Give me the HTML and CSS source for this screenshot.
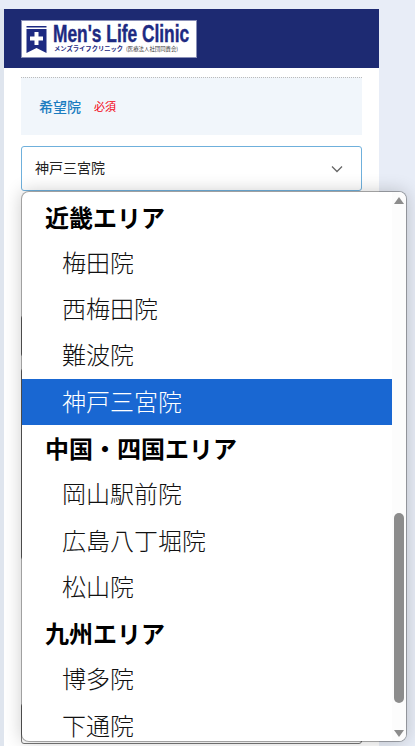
FILE: index.html
```html
<!DOCTYPE html>
<html lang="ja">
<head>
  <meta charset="UTF-8" />
  <title>Men's Life Clinic</title>
  <link rel="stylesheet" href="styles.css">
</head>
<body>
  <div class="page">
    <header class="site-header">
      <svg class="logo" width="176" height="38" viewBox="0 0 176 38">
        <rect x="0.5" y="0.5" width="175" height="37" fill="#fff" stroke="#8a90b8"/>
        <rect x="5.500" y="6" width="20" height="1.500" fill="#1d2a82"/>
        <path d="M5.500 9H25.500V33L15.500 28L5.500 33Z" fill="#1d2a82"/>
        <path d="M13.500 12H17.500V16.500H22V20.500H17.500V25H13.500V20.500H9V16.500H13.500Z" fill="#fff"/>
        <text transform="translate(32 21.500) scale(0.755 1)" class="logo-name">Men's Life Clinic</text>
        <text x="33" y="31" class="logo-kana">メンズライフクリニック</text>
        <text x="105" y="31" class="logo-corp">(医療法人社団同貴会)</text>
      </svg>
    </header>

    <main class="form-body">
      <div class="field-label">
        <span class="label-text">希望院</span>
        <span class="required">必須</span>
      </div>

      <div class="select-wrap">
        <div class="select-box">
          <span>神戸三宮院</span>
          <svg class="chevron" width="12" height="8" viewBox="0 0 12 8">
            <path d="M1 1.500L6 6.500L11 1.500" fill="none" stroke="#666" stroke-width="1.300"/>
          </svg>
        </div>

        <div class="dropdown">
          <ul class="option-list">
            <li class="group">近畿エリア</li>
            <li class="option">梅田院</li>
            <li class="option">西梅田院</li>
            <li class="option">難波院</li>
            <li class="option selected">神戸三宮院</li>
            <li class="group">中国・四国エリア</li>
            <li class="option">岡山駅前院</li>
            <li class="option">広島八丁堀院</li>
            <li class="option">松山院</li>
            <li class="group">九州エリア</li>
            <li class="option">博多院</li>
            <li class="option">下通院</li>
          </ul>
          <div class="scrollbar">
            <span class="arrow-up"></span>
            <div class="track"><div class="thumb"></div></div>
            <span class="arrow-down"></span>
          </div>
        </div>
      </div>

      <!-- form fields covered by the open dropdown -->
      <div class="hidden-field first"></div>
      <div class="hidden-field second"></div>
      <div class="hidden-field third"></div>
    </main>
  </div>
</body>
</html>
```

FILE: styles.css
```css
* {
  box-sizing: border-box;
}

html, body {
  height: 100%;
}

body {
  margin: 0;
  overflow: hidden;
  background: #e8edf7;
  font-family: "Noto Sans CJK JP", "Liberation Sans", sans-serif;
}

.page {
  width: 375px;
  margin: 9px 0 0 4px;
  background: #fff;
  box-shadow: -4px 0 0 #dfe5ee;
}

.site-header {
  display: flex;
  align-items: center;
  height: 59px;
  padding-left: 17px;
  background: #1d2a72;
}

.logo {
  display: block;
}

.logo-name {
  font-family: "Liberation Sans", sans-serif;
  font-size: 23px;
  font-weight: bold;
  fill: #1d2a82;
  stroke: #1d2a82;
  stroke-width: 0.4px;
}

.logo-kana {
  font-size: 6.300px;
  font-weight: bold;
  fill: #1d2a82;
}

.logo-corp {
  font-size: 5.400px;
  fill: #333;
}

.form-body {
  padding: 9px 17px 2px;
}

.field-label {
  display: flex;
  align-items: center;
  gap: 13px;
  height: 58px;
  padding: 0 0 2px 18px;
  background: #f1f6fb;
  border-top: 1px dotted #bbb;
}

.label-text {
  font-size: 14px;
  font-weight: 500;
  color: #1a7cc0;
}

.required {
  font-size: 11px;
  color: #f4000f;
}

.select-wrap {
  position: relative;
  margin-top: 11px;
}

.select-box {
  display: flex;
  align-items: center;
  justify-content: space-between;
  height: 45px;
  padding: 0 18px 3px 13px;
  background: #fff;
  border: 1px solid #6fb0dc;
  border-radius: 3px;
  font-size: 14px;
  color: #222;
}

.chevron {
  margin-top: 3px;
}

.dropdown {
  position: absolute;
  top: 100%;
  left: 0;
  z-index: 2;
  display: flex;
  width: 386px;
  height: 551px;
  background: #fff;
  background-clip: padding-box;
  border: 1px solid rgba(0, 0, 0, 0.3);
  border-radius: 8px;
  box-shadow: 0 0 18px rgba(0, 0, 0, 0.2);
  overflow: hidden;
}

.option-list {
  flex: 1;
  margin: 0;
  padding: 1.500px 0 0;
  list-style: none;
  overflow: hidden;
  font-size: 24px;
  color: #111;
}

.option-list li {
  height: 46.300px;
  line-height: 46.300px;
  white-space: nowrap;
}

.group {
  padding-left: 23px;
  font-weight: bold;
  color: #000;
}

.option-list .option {
  padding-left: 40px;
  font-weight: 300;
  line-height: 43.300px;
}

.option-list .selected {
  background: #1967d2;
  color: #fff;
}

.scrollbar {
  display: flex;
  flex-direction: column;
  align-items: center;
  width: 14px;
  padding: 5px 0 4px;
  background: #fcfcfc;
}

.track {
  display: flex;
  flex: 1;
  flex-direction: column;
  justify-content: flex-end;
  width: 100%;
  padding: 0 2px 27px;
}

.thumb {
  height: 190px;
  background: #8c8c8c;
  border-radius: 5px;
}

.arrow-up, .arrow-down {
  width: 0;
  height: 0;
  border-left: 5px solid transparent;
  border-right: 5px solid transparent;
}

.arrow-up {
  border-bottom: 7px solid #8c8c8c;
}

.arrow-down {
  border-top: 7px solid #8c8c8c;
}

.hidden-field {
  background: #fff;
  border: 1px solid #777;
  border-radius: 3px;
}

.first {
  height: 42px;
  margin-top: 124px;
}

.second {
  height: 192px;
  margin-top: 11px;
}

.third {
  height: 41px;
  margin-top: 143px;
}
```
